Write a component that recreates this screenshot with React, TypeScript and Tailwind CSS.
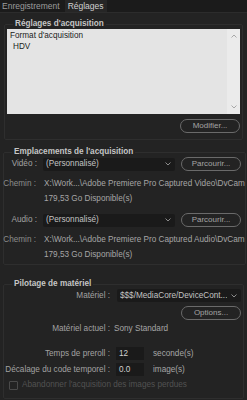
import React from "react";

const Pill = ({ label }: { label: string }) => (
  <button className="h-[14px] w-[60px] rounded-full border border-[#6a6a6a] text-[8px] leading-none text-[#a3a3a3]">
    {label}
  </button>
);

const Label = ({ text, w, color = "text-[#a2a2a2]" }: { text: string; w: string; color?: string }) => (
  <div className={`${w} shrink-0 flex justify-end whitespace-nowrap ${color}`}>
    <span>{text}</span>
  </div>
);

const Select = ({ value, w }: { value: string; w: string }) => (
  <div className={`${w} h-[13px] bg-[#1a1a1a] rounded-[2px] flex items-center justify-between pl-[3px] pr-[4px]`}>
    <span className="text-[#c3c3c3] truncate">{value}</span>
    <svg width="6" height="4" viewBox="0 0 6 4" className="shrink-0">
      <path d="M0.5 0.5 L3 3 L5.5 0.5" fill="none" stroke="#9a9a9a" strokeWidth="0.9" />
    </svg>
  </div>
);

const PathBlock = ({ kind }: { kind: string }) => (
  <>
    <div className="flex items-center h-[15px] mt-[5px]">
      <Label text="Chemin :" w="w-[32px]" color="text-[#8b8b8b]" />
      <div className="ml-[8px] text-[#a6a6a6] whitespace-nowrap">
        X:\Work...\Adobe Premiere Pro Captured {kind}\DvCam
      </div>
    </div>
    <div className="h-[15px] flex items-center pl-[40px] text-[#a6a6a6]">179,53 Go Disponible(s)</div>
  </>
);

export default function App() {
  return (
    <div
      className="w-[247px] h-[400px] bg-[#232323] overflow-hidden text-[8.2px] leading-[10px]"
      style={{ fontFamily: '"Liberation Sans", Arial, sans-serif' }}
    >
      <div className="h-[13px] bg-[#1b1b1b] border-b border-[#2c2c2c] flex items-center text-[8.5px]">
        <div className="pl-[2px] pr-[4px] text-[#9c9c9c]">Enregistrement</div>
        <div className="h-full ml-[1px] px-[3px] flex items-center bg-[#262626] text-[#d2d2d2]">Réglages</div>
      </div>

      <fieldset className="mx-[4px] mt-[6px] border border-[#2e2e2e] rounded-[2px] px-[2px] pb-[6px]">
        <legend className="ml-[6px] px-[2px] font-bold text-[#c6c6c6]">Réglages d'acquisition</legend>
        <div className="h-[85px] bg-[#e4e4e4] flex">
          <div className="flex-1 pl-[3px] pt-[1px] text-[#1c1c1c] leading-[11px]">
            <div>Format d'acquisition</div>
            <div className="pl-[3px]">HDV</div>
          </div>
          <div className="w-[13px] bg-[#ebebeb] flex flex-col items-center justify-between py-[5px]">
            <svg width="6" height="4" viewBox="0 0 6 4">
              <path d="M0.5 3.5 L3 1 L5.5 3.5" fill="none" stroke="#a0a0a0" strokeWidth="0.9" />
            </svg>
            <svg width="6" height="4" viewBox="0 0 6 4">
              <path d="M0.5 0.5 L3 3 L5.5 0.5" fill="none" stroke="#a0a0a0" strokeWidth="0.9" />
            </svg>
          </div>
        </div>
        <div className="flex justify-end mt-[5px]">
          <Pill label="Modifier..." />
        </div>
      </fieldset>

      <fieldset className="mx-[3px] mt-[7px] border border-[#2e2e2e] rounded-[2px] pb-[2px]">
        <legend className="ml-[8px] px-[2px] font-bold text-[#c6c6c6]">Emplacements de l'acquisition</legend>
        <div className="flex items-center">
          <Label text="Vidéo :" w="w-[33px]" />
          <div className="ml-[6px]">
            <Select value="(Personnalisé)" w="w-[132px]" />
          </div>
          <div className="ml-[6px]">
            <Pill label="Parcourir..." />
          </div>
        </div>
        <PathBlock kind="Video" />
        <div className="flex items-center mt-[7px]">
          <Label text="Audio :" w="w-[33px]" />
          <div className="ml-[6px]">
            <Select value="(Personnalisé)" w="w-[132px]" />
          </div>
          <div className="ml-[6px]">
            <Pill label="Parcourir..." />
          </div>
        </div>
        <PathBlock kind="Audio" />
      </fieldset>

      <fieldset className="mx-[3px] mt-[14px] border border-[#2e2e2e] rounded-[2px] pb-[8px]">
        <legend className="ml-[8px] px-[2px] font-bold text-[#c6c6c6]">Pilotage de matériel</legend>
        <div className="flex items-center">
          <Label text="Matériel :" w="w-[106px]" />
          <div className="ml-[7px]">
            <Select value="$$$/MediaCore/DeviceCont..." w="w-[124px]" />
          </div>
        </div>
        <div className="flex justify-end mt-[4px] pr-[2px]">
          <Pill label="Options..." />
        </div>
        <div className="flex items-center h-[12px] mt-[3px]">
          <Label text="Matériel actuel :" w="w-[106px]" />
          <div className="ml-[4px] text-[#a6a6a6]">Sony Standard</div>
        </div>
        <div className="flex items-center mt-[12px]">
          <Label text="Temps de preroll :" w="w-[106px]" />
          <div className="ml-[6px] w-[28px] h-[13px] bg-[#1a1a1a] flex items-center pl-[3px] text-[#d0d0d0]">12</div>
          <div className="ml-[9px] text-[#a6a6a6]">seconde(s)</div>
        </div>
        <div className="flex items-center mt-[3px]">
          <Label text="Décalage du code temporel :" w="w-[106px]" />
          <div className="ml-[6px] w-[28px] h-[13px] bg-[#1a1a1a] flex items-center pl-[3px] text-[#d0d0d0]">0.0</div>
          <div className="ml-[9px] text-[#a6a6a6]">image(s)</div>
        </div>
        <div className="flex items-center mt-[4px] pl-[5px]">
          <div className="w-[9px] h-[9px] border border-[#4a4a4a] rounded-[1px]" />
          <div className="ml-[4px] text-[#525252] whitespace-nowrap">Abandonner l'acquisition des images perdues</div>
        </div>
      </fieldset>
    </div>
  );
}
